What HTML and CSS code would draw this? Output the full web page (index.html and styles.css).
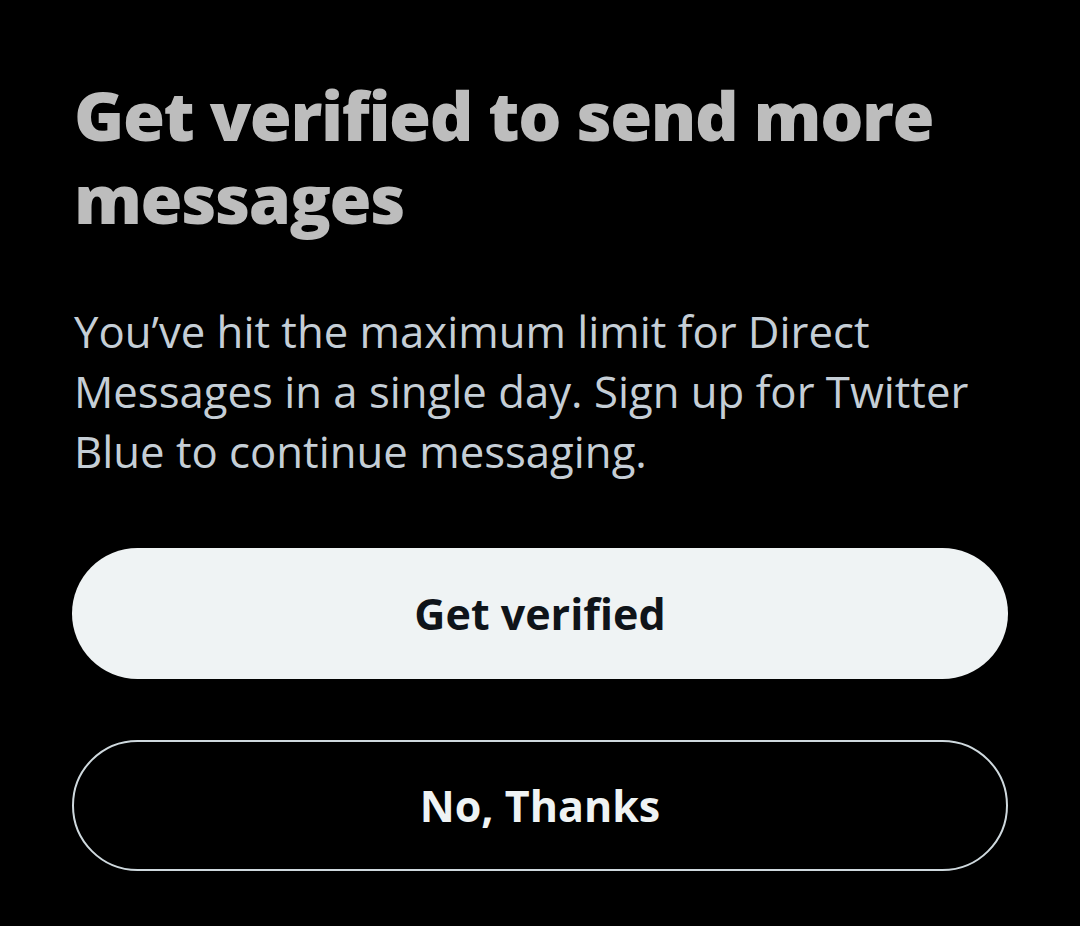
FILE: index.html
```html
<!DOCTYPE html>
<html>
<head>
<meta charset="utf-8">
<title>Get verified</title>
<link rel="stylesheet" href="styles.css">
</head>
<body>
<div class="sheet">
	<h1 class="title">Get verified to send more messages</h1>
	<p class="desc">You’ve hit the maximum limit for Direct Messages in a single day. Sign up for Twitter Blue to continue messaging.</p>
	<div class="actions">
		<a href="javascript:;" class="btn btn-fill">Get verified</a>
		<a href="javascript:;" class="btn btn-line">No, Thanks</a>
	</div>
</div>
</body>
</html>
```

FILE: styles.css
```css
*{margin:0; padding:0; box-sizing:border-box;}
html,body{background:#000;}
body{font-family:"Open Sans","Liberation Sans",Arial,sans-serif; width:1080px; height:926px; overflow:hidden;}
.sheet{width:936px; margin-left:72px; padding-top:73px;}
.title{font-size:68px; line-height:83px; font-weight:800; color:#bdbdbd; padding-left:2px; letter-spacing:-1.4px;}
.desc{margin-top:62px; font-size:43.7px; line-height:60px; color:#c5ced6; padding-left:2px; padding-right:20px;}
.actions{display:flex; flex-direction:column; gap:61px; margin-top:67px;}
.btn{display:flex; align-items:center; justify-content:center; height:131px; border-radius:66px; font-size:43px; font-weight:700; text-decoration:none;}
.btn-fill{background:#eff3f4; color:#0f1419;}
.btn-line{border:2px solid #cfd9de; color:#eff3f4;}
```
